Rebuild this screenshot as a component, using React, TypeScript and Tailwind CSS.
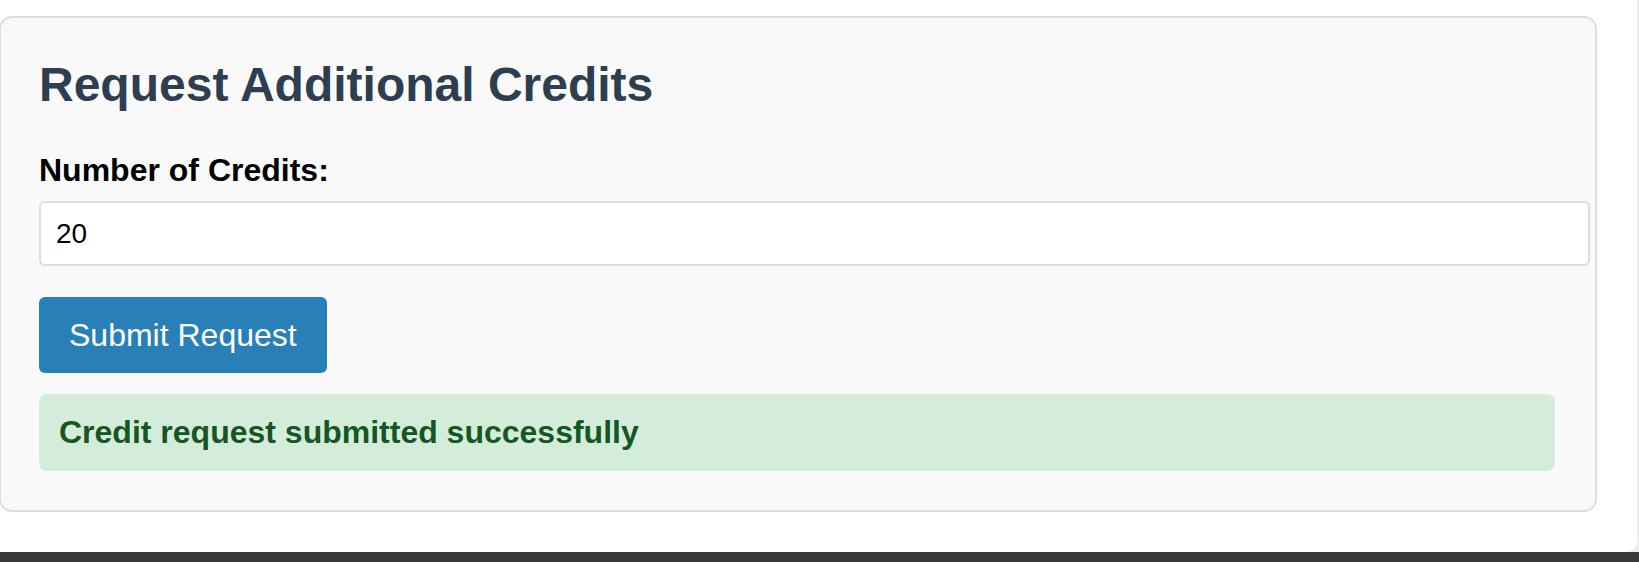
import React from "react";

export default function App() {
  return (
    <div
      className="w-[1639px] h-[562px] bg-[#ececf1] flex flex-col overflow-hidden"
      style={{ fontFamily: '"Liberation Sans", Arial, Helvetica, sans-serif' }}
    >
      <div className="w-[1637px] h-[552px] bg-white rounded-br-[10px] pt-[16px] overflow-hidden">
        <div className="-ml-[1px] w-[1598px] bg-[#f9f9f9] border-2 border-[#dddddd] rounded-[13px] pl-[38px] pr-[40px] pt-[39px] pb-[39px]">
          <h2 className="text-[48px] leading-[56px] font-bold text-[#2c3e50]">
            Request Additional Credits
          </h2>
          <label className="block mt-[39px] text-[32px] leading-[37px] font-bold text-black">
            Number of Credits:
          </label>
          <div className="mt-[12px] w-[1551px] h-[65px] bg-white border-2 border-[#dddddd] rounded-[6px] px-[15px] flex items-center">
            <span className="text-[28px] leading-[32px] text-black">20</span>
          </div>
          <button className="mt-[31px] h-[76px] px-[30px] bg-[#2980b9] text-white text-[32px] leading-[37px] rounded-[6px] flex items-center">
            Submit Request
          </button>
          <div className="mt-[21px] h-[77px] bg-[#d4edda] rounded-[8px] px-[20px] flex items-center">
            <span className="text-[32px] leading-[37px] font-bold text-[#155724]">
              Credit request submitted successfully
            </span>
          </div>
        </div>
      </div>
      <div className="h-[10px] w-full bg-[#383838]" />
    </div>
  );
}
